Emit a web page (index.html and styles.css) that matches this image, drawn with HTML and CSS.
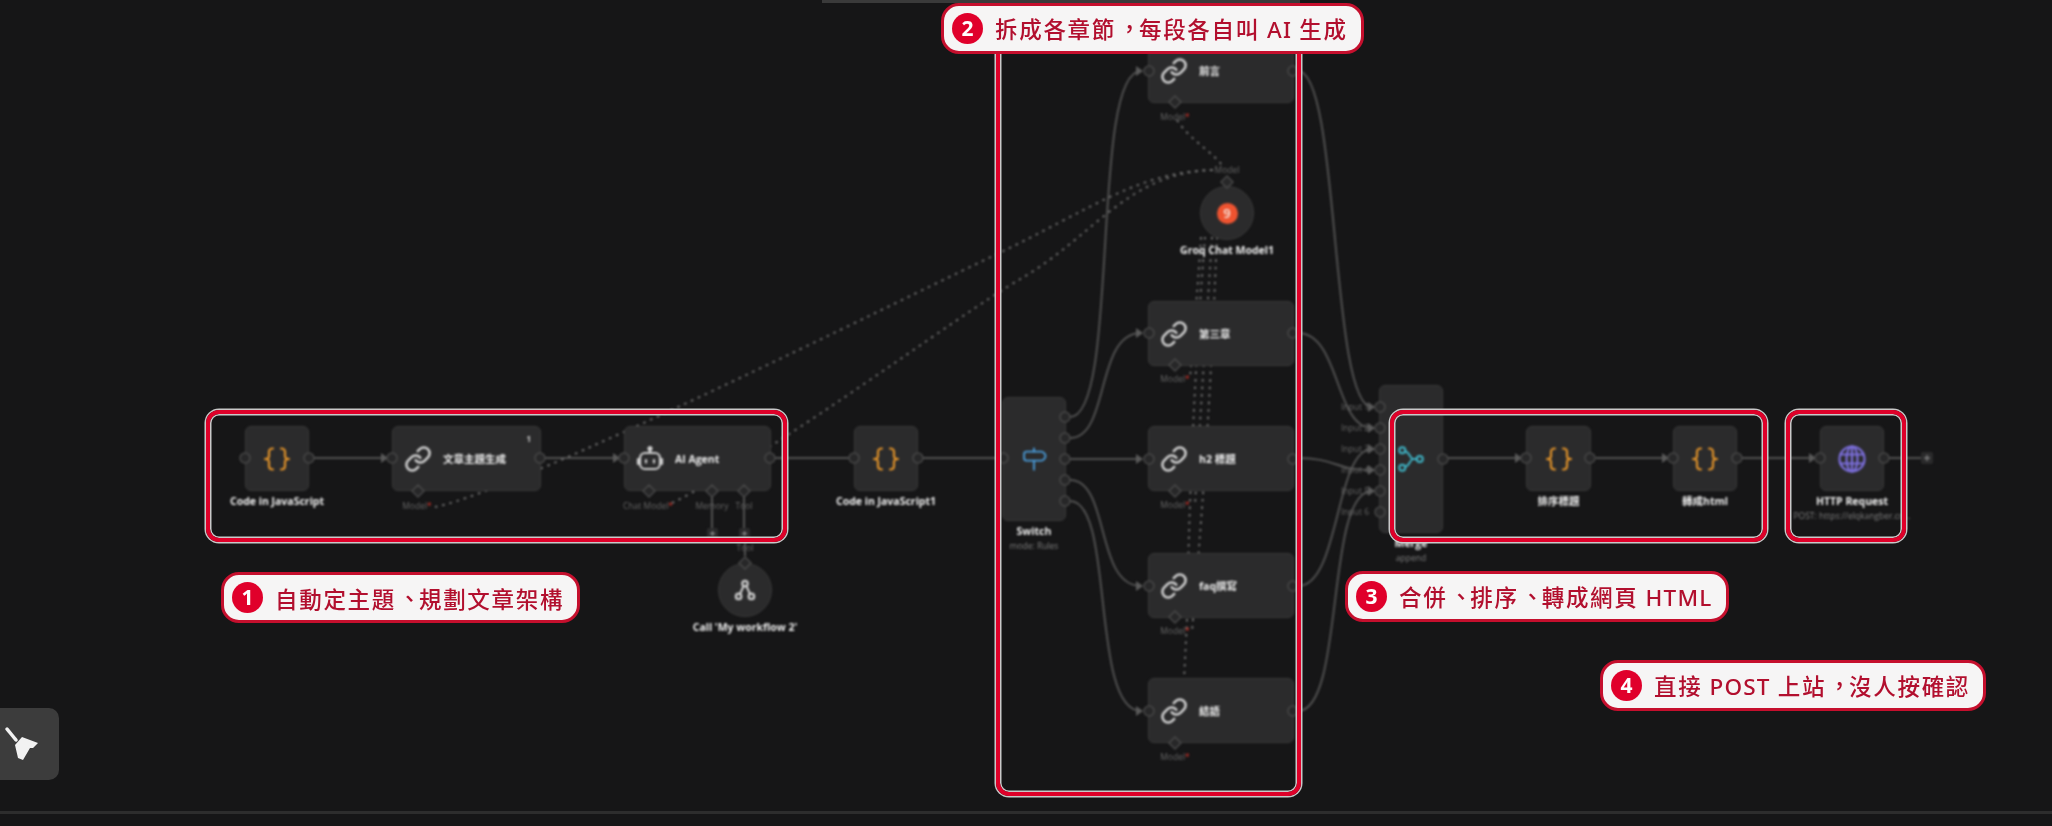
FILE: index.html
```html
<!DOCTYPE html>
<html lang="zh-TW">
<head>
    <meta charset="UTF-8" />
    <title>n8n workflow</title>
    <link rel="stylesheet" href="styles.css">
</head>
<body>
<div class="canvas">

    <div class="top-tab"></div>

    <!-- icon set -->
    <svg class="defs" width="0" height="0">
        <symbol id="i-code" viewBox="0 0 28 28">
            <path d="M10 3.500c-3 0-4 1-4 3.500v4c0 2-1.500 3-4 3 2.500 0 4 1 4 3v4c0 2.500 1 3.500 4 3.500M18 3.500c3 0 4 1 4 3.500v4c0 2 1.500 3 4 3-2.500 0-4 1-4 3v4c0 2.500-1 3.500-4 3.500" />
        </symbol>
        <symbol id="i-link" viewBox="0 0 24 24">
            <path d="M10 13a5 5 0 0 0 7.540.540l3-3a5 5 0 0 0-7.070-7.070l-1.720 1.710" />
            <path d="M14 11a5 5 0 0 0-7.540-.540l-3 3a5 5 0 0 0 7.070 7.070l1.710-1.710" />
        </symbol>
        <symbol id="i-robot" viewBox="0 0 28 28">
            <path d="M14 3v5" />
            <circle cx="14" cy="3.500" r="1.500" />
            <rect x="4" y="8" width="20" height="16" rx="5" />
            <path d="M2 14v5M26 14v5" />
            <path d="M10 15v2.500M18 15v2.500" />
        </symbol>
        <symbol id="i-switch" viewBox="0 0 34 30">
            <path d="M17 2v4M17 17v11" />
            <path d="M8 6h18c2 0 5 3 5 5.500s-3 5.500-5 5.500H8c-2 0-3-1-3-2.500v-6C5 7 6 6 8 6z" />
        </symbol>
        <symbol id="i-merge" viewBox="0 0 32 32">
            <circle cx="6" cy="6" r="3.500" />
            <circle cx="6" cy="26" r="3.500" />
            <circle cx="26" cy="16" r="3.500" />
            <path d="M9.500 7C15 9 14 14 18 16H22.500M9.500 25C15 23 14 18 18 16" />
        </symbol>
        <symbol id="i-globe" viewBox="0 0 28 28">
            <circle cx="14" cy="14" r="12.500" />
            <ellipse cx="14" cy="14" rx="5.500" ry="12.500" />
            <path d="M14 1.500v25M2.500 9.500h23M2.500 18.500h23" />
        </symbol>
        <symbol id="i-tree" viewBox="0 0 24 24">
            <circle cx="12" cy="5" r="3" />
            <circle cx="5" cy="19" r="3" />
            <circle cx="19" cy="19" r="3" />
            <path d="M10.500 7.500 6.500 16.500M13.500 7.500l4 9" />
        </symbol>
        <symbol id="arrow" overflow="visible"><path d="M-6 -5 L1 0 L-6 5z" /></symbol>
    </svg>

    <div class="graph">

        <!-- connections, under the nodes -->
        <svg class="edges" width="2052" height="826">
            <g class="line">
                <path d="M314 458H390M545 458H622M775 458H852M923 458H1000" />
                <path d="M1070 417C1120 417 1090 71 1141 71" />
                <path d="M1070 438C1110 438 1095 333 1141 333" />
                <path d="M1070 459H1141" />
                <path d="M1070 480C1110 480 1095 586 1141 586" />
                <path d="M1070 501C1115 501 1090 711 1141 711" />
                <path d="M1298 71C1340 71 1330 407 1372 407" />
                <path d="M1298 333C1340 333 1335 428 1372 428" />
                <path d="M1298 458C1335 458 1335 470 1372 470" />
                <path d="M1298 586C1340 586 1335 449 1372 449" />
                <path d="M1298 711C1345 711 1325 491 1372 491" />
                <path d="M1448 458H1520M1596 458H1667M1742 458H1814M1889 458H1921" />
                <path d="M712 496V530M744 496V530M745 540V556" />
            </g>
            <g class="dots">
                <path d="M435 507C520 490 900 300 995 255S1140 170 1217 170" />
                <path d="M672 503C780 450 950 320 1022 278S1130 170 1217 170" />
                <path d="M1177 120C1190 140 1210 150 1222 165" />
                <path d="M1217 237C1214 300 1210 430 1192 631" />
                <path d="M1212 237C1208 300 1200 420 1195 505" />
                <path d="M1205 237C1200 300 1190 440 1187 620L1184 680" />
                <path d="M1201 237C1197 300 1193 340 1190 378" />
            </g>
        </svg>

        <!-- nodes -->
        <div class="node code-a">
            <div class="box small"><svg class="icon orange"><use href="#i-code" /></svg></div>
            <div class="name">Code in JavaScript</div>
        </div>
        <div class="node topic">
            <div class="box wide">
                <svg class="icon silver"><use href="#i-link" /></svg>
                <span class="title">文章主題生成</span>
                <span class="pin">1</span>
            </div>
        </div>
        <div class="node agent">
            <div class="box wide">
                <svg class="icon silver robot"><use href="#i-robot" /></svg>
                <span class="title">AI Agent</span>
            </div>
        </div>
        <div class="node code-b">
            <div class="box small"><svg class="icon orange"><use href="#i-code" /></svg></div>
            <div class="name">Code in JavaScript1</div>
        </div>
        <div class="node call">
            <div class="box round"><svg class="icon-sm silver"><use href="#i-tree" /></svg></div>
            <div class="name">Call 'My workflow 2'</div>
        </div>
        <div class="node switch">
            <div class="box tall-a"><svg class="icon blue"><use href="#i-switch" /></svg></div>
            <div class="name">Switch</div>
            <div class="sub">mode: Rules</div>
        </div>
        <div class="node ch-1">
            <div class="box wide">
                <svg class="icon silver"><use href="#i-link" /></svg>
                <span class="title">前言</span>
            </div>
        </div>
        <div class="node groq">
            <div class="box round"><span class="groq-badge">9</span></div>
            <div class="name">Groq Chat Model1</div>
        </div>
        <div class="node ch-2">
            <div class="box wide">
                <svg class="icon silver"><use href="#i-link" /></svg>
                <span class="title">第三章</span>
            </div>
        </div>
        <div class="node ch-3">
            <div class="box wide">
                <svg class="icon silver"><use href="#i-link" /></svg>
                <span class="title">h2 標題</span>
            </div>
        </div>
        <div class="node ch-4">
            <div class="box wide">
                <svg class="icon silver"><use href="#i-link" /></svg>
                <span class="title">faq撰寫</span>
            </div>
        </div>
        <div class="node ch-5">
            <div class="box wide">
                <svg class="icon silver"><use href="#i-link" /></svg>
                <span class="title">結語</span>
            </div>
        </div>
        <div class="node merge">
            <div class="box tall-b"><svg class="icon teal"><use href="#i-merge" /></svg></div>
            <div class="name">Merge</div>
            <div class="sub">append</div>
        </div>
        <div class="node code-c">
            <div class="box small"><svg class="icon orange"><use href="#i-code" /></svg></div>
            <div class="name">排序標題</div>
        </div>
        <div class="node code-d">
            <div class="box small"><svg class="icon orange"><use href="#i-code" /></svg></div>
            <div class="name">轉成html</div>
        </div>
        <div class="node http">
            <div class="box small"><svg class="icon purple"><use href="#i-globe" /></svg></div>
            <div class="name">HTTP Request</div>
            <div class="sub">POST: https://elqkangber.co...</div>
        </div>

        <!-- handles and port labels, over the nodes -->
        <svg class="handles" width="2052" height="826">
            <g class="arrows">
                <use href="#arrow" x="387" y="458" /><use href="#arrow" x="619" y="458" />
                <use href="#arrow" x="1142" y="71" /><use href="#arrow" x="1142" y="333" />
                <use href="#arrow" x="1142" y="459" /><use href="#arrow" x="1142" y="586" />
                <use href="#arrow" x="1142" y="711" />
                <use href="#arrow" x="1374" y="407" /><use href="#arrow" x="1374" y="428" />
                <use href="#arrow" x="1374" y="449" /><use href="#arrow" x="1374" y="470" />
                <use href="#arrow" x="1374" y="491" />
                <use href="#arrow" x="1521" y="458" /><use href="#arrow" x="1668" y="458" />
                <use href="#arrow" x="1815" y="458" />
            </g>
            <g class="ring">
                <circle cx="245" cy="458" r="5" /><circle cx="309" cy="458" r="5" />
                <circle cx="392" cy="458" r="5" /><circle cx="540" cy="458" r="5" />
                <circle cx="624" cy="458" r="5" /><circle cx="770" cy="458" r="5" />
                <circle cx="854" cy="458" r="5" /><circle cx="918" cy="458" r="5" />
                <circle cx="1003" cy="458" r="5" />
                <circle cx="1065" cy="417" r="5" /><circle cx="1065" cy="438" r="5" />
                <circle cx="1065" cy="459" r="5" /><circle cx="1065" cy="480" r="5" />
                <circle cx="1065" cy="501" r="5" />
                <circle cx="1149" cy="71" r="5" /><circle cx="1293" cy="71" r="5" />
                <circle cx="1149" cy="333" r="5" /><circle cx="1293" cy="333" r="5" />
                <circle cx="1149" cy="459" r="5" /><circle cx="1293" cy="459" r="5" />
                <circle cx="1149" cy="586" r="5" /><circle cx="1293" cy="586" r="5" />
                <circle cx="1149" cy="711" r="5" /><circle cx="1293" cy="711" r="5" />
                <circle cx="1380" cy="407" r="5" /><circle cx="1380" cy="428" r="5" />
                <circle cx="1380" cy="449" r="5" /><circle cx="1380" cy="470" r="5" />
                <circle cx="1380" cy="491" r="5" /><circle cx="1380" cy="512" r="5" />
                <circle cx="1443" cy="459" r="5" />
                <circle cx="1526" cy="458" r="5" /><circle cx="1590" cy="458" r="5" />
                <circle cx="1673" cy="458" r="5" /><circle cx="1737" cy="458" r="5" />
                <circle cx="1820" cy="458" r="5" /><circle cx="1884" cy="458" r="5" />
            </g>
            <g class="ring">
                <path d="M418 485l6 6-6 6-6-6zM649 485l6 6-6 6-6-6zM712 485l6 6-6 6-6-6zM744 485l6 6-6 6-6-6z" />
                <path d="M745 557l6 6-6 6-6-6zM1227 176l6 6-6 6-6-6z" />
                <path d="M1175 96l6 6-6 6-6-6zM1175 359l6 6-6 6-6-6zM1175 485l6 6-6 6-6-6zM1175 611l6 6-6 6-6-6zM1175 737l6 6-6 6-6-6z" />
            </g>
            <g class="plus">
                <rect x="707" y="528" width="11" height="11" rx="2" />
                <rect x="739" y="528" width="11" height="11" rx="2" />
                <rect x="1921" y="452" width="12" height="12" rx="2" />
                <path d="M712.500 531v5M710 533.500h5M744.500 531v5M742 533.500h5M1927 455v6M1924 458h6" />
            </g>
            <g class="port">
                <text x="417" y="509">Model<tspan class="req">*</tspan></text>
                <text x="648" y="509">Chat Model<tspan class="req">*</tspan></text>
                <text x="712" y="509">Memory</text>
                <text x="744" y="509">Tool</text>
                <text x="745" y="551">Tool</text>
                <text x="1227" y="173">Model</text>
                <text x="1175" y="120">Model<tspan class="req">*</tspan></text>
                <text x="1175" y="382">Model<tspan class="req">*</tspan></text>
                <text x="1175" y="508">Model<tspan class="req">*</tspan></text>
                <text x="1175" y="634">Model<tspan class="req">*</tspan></text>
                <text x="1175" y="760">Model<tspan class="req">*</tspan></text>
                <text x="1355" y="410">Input 1</text>
                <text x="1355" y="431">Input 2</text>
                <text x="1355" y="452">Input 3</text>
                <text x="1355" y="473">Input 4</text>
                <text x="1355" y="494">Input 5</text>
                <text x="1355" y="515">Input 6</text>
            </g>
        </svg>
    </div>

    <!-- red outlines -->
    <div class="frame frame-1"></div>
    <div class="frame frame-2"></div>
    <div class="frame frame-3"></div>
    <div class="frame frame-4"></div>

    <!-- callouts -->
    <div class="pill pill-1"><span class="num">1</span><span>自動定主題<span class="mark">、</span>規劃文章架構</span></div>
    <div class="pill pill-2"><span class="num">2</span><span>拆成各章節<span class="mark">，</span>每段各自叫<span class="en"> AI </span>生成</span></div>
    <div class="pill pill-3"><span class="num">3</span><span>合併<span class="mark">、</span>排序<span class="mark">、</span>轉成網頁<span class="en"> HTML</span></span></div>
    <div class="pill pill-4"><span class="num">4</span><span>直接<span class="en"> POST </span>上站<span class="mark">，</span>沒人按確認</span></div>

    <button class="broom">
        <svg width="59" height="72" viewBox="0 0 59 72">
            <path class="broom-stick" d="M7 21L16 32" />
            <path class="broom-head" d="M15 37L22 29L38 35L33 40L30 40L23 52L18 50z" />
        </svg>
    </button>

    <div class="bottom-line"></div>
</div>
</body>
</html>
```

FILE: styles.css
```css
* {
    margin: 0;
    padding: 0;
    box-sizing: border-box;
}

body {
    background: #161617;
    font-family: 'Open Sans', 'Noto Sans CJK TC', sans-serif;
    overflow: hidden;
}

.canvas {
    position: relative;
    width: 2052px;
    height: 826px;
    overflow: hidden;
}

.defs {
    position: absolute;
}

.top-tab {
    position: absolute;
    left: 822px;
    top: 0;
    width: 478px;
    height: 3px;
    background: #3a3a3a;
}

.graph {
    position: absolute;
    inset: 0;
    filter: blur(0.8px);
}

.edges,
.handles {
    position: absolute;
    left: 0;
    top: 0;
}

/* connections */
.line path {
    fill: none;
    stroke: #505050;
    stroke-width: 2;
}

.dots path {
    fill: none;
    stroke: #6e6e6e;
    stroke-width: 2;
    stroke-dasharray: 2.500 5;
}

/* nodes */
.node {
    position: absolute;
    display: flex;
    flex-direction: column;
    align-items: center;
    white-space: nowrap;
}

.box {
    position: relative;
    display: flex;
    align-items: center;
    justify-content: center;
    flex-shrink: 0;
    width: 100%;
    background: #2b2b2c;
    border: 1.5px solid #3a3a3a;
    border-radius: 6px;
}

.box.small { height: 65px; }
.box.tall-a { height: 124px; }
.box.tall-b { height: 148px; }

.box.wide {
    height: 65px;
    justify-content: flex-start;
    padding-left: 11px;
    gap: 11px;
}

.box.round {
    width: 54px;
    height: 54px;
    border-radius: 50%;
}

.code-a { left: 245px; top: 426px; width: 64px; }
.topic { left: 392px; top: 426px; width: 149px; }
.agent { left: 624px; top: 426px; width: 147px; }
.code-b { left: 854px; top: 426px; width: 64px; }
.call { left: 718px; top: 563px; width: 54px; }
.switch { left: 1002px; top: 397px; width: 64px; }
.ch-1 { left: 1148px; top: 38px; width: 146px; }
.groq { left: 1200px; top: 186px; width: 54px; }
.ch-2 { left: 1148px; top: 301px; width: 146px; }
.ch-3 { left: 1148px; top: 426px; width: 146px; }
.ch-4 { left: 1148px; top: 553px; width: 146px; }
.ch-5 { left: 1148px; top: 678px; width: 146px; }
.merge { left: 1379px; top: 385px; width: 64px; }
.code-c { left: 1526px; top: 426px; width: 65px; }
.code-d { left: 1673px; top: 426px; width: 64px; }
.http { left: 1820px; top: 426px; width: 64px; }

.name {
    margin-top: 4px;
    font-size: 10.500px;
    line-height: 13px;
    font-weight: 700;
    color: #eeeeee;
}

.sub {
    margin-top: 2px;
    font-size: 8.500px;
    line-height: 12px;
    color: #7e7e7e;
}

.title {
    font-size: 10.500px;
    font-weight: 700;
    color: #eeeeee;
}

.pin {
    position: absolute;
    top: 6px;
    right: 9px;
    font-size: 8px;
    font-weight: 700;
    color: #ccc;
}

/* node icons */
.icon {
    flex-shrink: 0;
    width: 28px;
    height: 28px;
    fill: none;
    stroke-width: 2.200;
    stroke-linecap: round;
    stroke-linejoin: round;
}

.icon-sm {
    width: 22px;
    height: 22px;
    fill: none;
    stroke-width: 2.400;
}

.orange { stroke: #e0922a; }
.silver { stroke: #cfcfcf; }
.blue { stroke: #4a9ddc; }
.teal { stroke: #3fb6c8; }
.purple { stroke: #7c6fdc; }

.groq-badge {
    width: 21px;
    height: 21px;
    border-radius: 50%;
    background: #ee5330;
    color: #f5e6df;
    font-size: 13px;
    line-height: 21px;
    font-weight: 600;
    text-align: center;
}

/* handles */
.ring circle,
.ring path {
    fill: #272728;
    stroke: #484848;
    stroke-width: 1.500;
}

.arrows {
    fill: #5a5a5a;
}

.plus rect {
    fill: #2b2b2c;
}

.plus path {
    fill: none;
    stroke: #999;
    stroke-width: 1;
}

.port text {
    font-size: 8.500px;
    fill: #666;
    text-anchor: middle;
}

.port .req {
    fill: #e0352b;
}

/* red outlines */
.frame {
    position: absolute;
    border: 4px solid #df0029;
    border-radius: 13px;
    box-shadow: 0 0 0 1.500px #c9c9c9, inset 0 0 0 1.500px #c9c9c9;
}

.frame-1 { left: 206px; top: 410px; width: 581px; height: 132px; }
.frame-2 { left: 996px; top: 30px; width: 305px; height: 766px; }
.frame-3 { left: 1390px; top: 410px; width: 377px; height: 132px; }
.frame-4 { left: 1786px; top: 410px; width: 120px; height: 132px; }

/* callouts */
.pill {
    position: absolute;
    display: flex;
    align-items: center;
    height: 51px;
    padding: 0 13px 0 8px;
    gap: 12px;
    background: #f6f5f5;
    border: 3px solid #c50f2d;
    border-radius: 18px;
    color: #b20f2e;
    font-family: 'Noto Sans CJK TC', sans-serif;
    font-size: 22.500px;
    font-weight: 500;
    letter-spacing: 1.700px;
    white-space: nowrap;
    filter: blur(0.4px);
}

.en {
    font-family: 'Noto Sans', sans-serif;
    letter-spacing: 1.200px;
}

/* the font sets these marks low in the cell, the reference has them centred */
.mark {
    letter-spacing: -0.500em;
    margin-left: 0.100em;
    margin-right: 0.420em;
    line-height: 0;
    vertical-align: 1px;
}

.num {
    flex-shrink: 0;
    width: 31px;
    height: 31px;
    border-radius: 50%;
    background: #e0002b;
    color: #fff;
    font-family: 'Noto Sans', sans-serif;
    font-size: 21px;
    line-height: 31px;
    font-weight: 700;
    letter-spacing: 0;
    text-align: center;
}

.pill-1 { left: 221px; top: 572px; }
.pill-2 { left: 941px; top: 3px; }
.pill-3 { left: 1345px; top: 571px; }
.pill-4 { left: 1600px; top: 660px; }

/* bottom-left tool button */
.broom {
    position: absolute;
    left: 0;
    top: 708px;
    width: 59px;
    height: 72px;
    display: flex;
    background: #3c3c3c;
    border: none;
    border-radius: 0 10px 10px 0;
}

.broom-stick {
    fill: none;
    stroke: #f2f2f2;
    stroke-width: 3.500;
    stroke-linecap: round;
}

.broom-head {
    fill: #f2f2f2;
}

.bottom-line {
    position: absolute;
    left: 0;
    right: 0;
    top: 811px;
    height: 3px;
    background: #2d2d2d;
}
```
